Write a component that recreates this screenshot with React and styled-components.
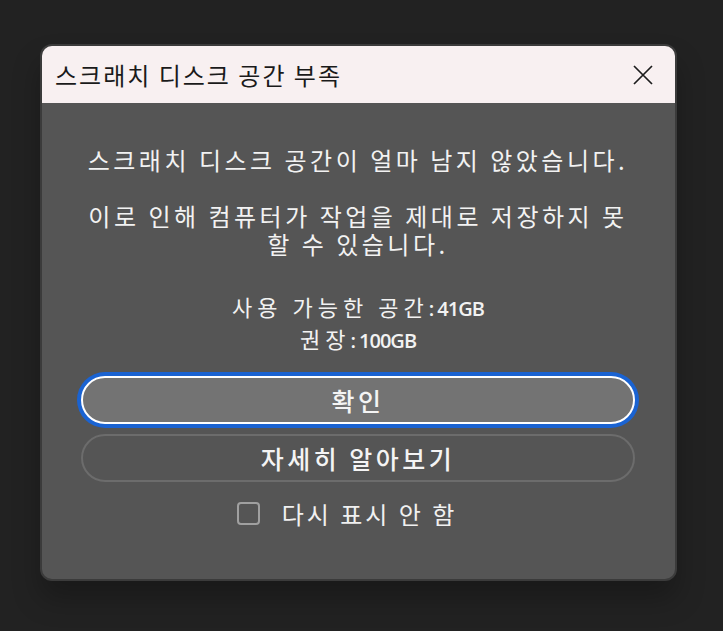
import styled, { createGlobalStyle } from "styled-components"

const GlobalStyle = createGlobalStyle`
  html, body {
    margin: 0;
    padding: 0;
    background: #222222;
  }
  body {
    font-family: "Noto Sans CJK KR", "Noto Sans", sans-serif;
  }
`

export default function App(){
  return (
    <Page>
      <GlobalStyle />
      <Dialog>
        <TitleBar>
          <Title>스크래치 디스크 공간 부족</Title>
          <CloseButton aria-label="닫기">
            <svg width="20" height="20" viewBox="0 0 20 20">
              <path d="M1 1 L19 19 M19 1 L1 19" stroke="#1c1c1c" strokeWidth="1.7" fill="none" />
            </svg>
          </CloseButton>
        </TitleBar>
        <Body>
          <Message>스크래치 디스크 공간이 얼마 남지 않았습니다.</Message>
          <Message gap={28}>이로 인해 컴퓨터가 작업을 제대로 저장하지 못 할 수 있습니다.</Message>
          <Stats>
            <StatLine>사용 가능한 공간<Num>: 41GB</Num></StatLine>
            <StatLine>권장<Num>: 100GB</Num></StatLine>
          </Stats>
          <Button primary>확인</Button>
          <Button>자세히 알아보기</Button>
          <CheckRow>
            <Box />
            <CheckLabel>다시 표시 안 함</CheckLabel>
          </CheckRow>
        </Body>
      </Dialog>
    </Page>
  )
}

const Page = styled.div`
  width: 723px;
  height: 631px;
  padding: 44px 0 0 40px;
  box-sizing: border-box;
`

const Dialog = styled.div`
  width: 637px;
  height: 537px;
  box-sizing: border-box;
  border: 2px solid #3b3b3b;
  border-radius: 12px;
  background: #555555;
  overflow: hidden;
  box-shadow: 0 18px 28px rgba(0, 0, 0, 0.25);
  display: flex;
  flex-direction: column;
`

const TitleBar = styled.div`
  height: 57px;
  flex-shrink: 0;
  background: #f8f0f1;
  display: flex;
  align-items: center;
  justify-content: space-between;
  padding: 0 22px 0 13px;
`

const Title = styled.div`
  font-size: 24px;
  letter-spacing: 2px;
  color: #1a1a1a;
`

const CloseButton = styled.div`
  width: 20px;
  height: 20px;
  display: flex;
`

const Body = styled.div`
  padding: 43px 40px 0 39px;
  display: flex;
  flex-direction: column;
  align-items: stretch;
  color: #f2f2f2;
  text-align: center;
`

const Message = styled.p`
  margin: ${p => p.gap || 0}px 6px 0;
  font-size: 24px;
  line-height: 28px;
  letter-spacing: 3.5px;
`

const Stats = styled.div`
  margin-top: 32px;
  font-size: 22px;
  letter-spacing: 5px;
`

const StatLine = styled.div`
  height: 32px;
  line-height: 32px;
`

const Num = styled.span`
  font-family: "Open Sans", "Noto Sans", sans-serif;
  font-size: 20px;
  line-height: 1;
  letter-spacing: -1px;
  font-weight: 600;
`

const Button = styled.div`
  height: 48px;
  box-sizing: border-box;
  margin-top: ${p => p.primary ? 22 : 10}px;
  border-radius: 24px;
  border: 2px solid ${p => p.primary ? "#ffffff" : "#6c6c6c"};
  background: ${p => p.primary ? "#737373" : "transparent"};
  box-shadow: ${p => p.primary ? "0 0 0 4px #1a63d2" : "none"};
  display: flex;
  align-items: center;
  justify-content: center;
  font-size: 25px;
  font-weight: 500;
  letter-spacing: 3.5px;
  color: #f4f4f4;
`

const CheckRow = styled.div`
  margin-top: 14px;
  display: flex;
  align-items: center;
  justify-content: center;
  gap: 22px;
  padding-right: 22px;
`

const Box = styled.div`
  width: 23px;
  height: 23px;
  box-sizing: border-box;
  border: 2px solid #a0a0a0;
  border-radius: 4px;
`

const CheckLabel = styled.span`
  font-size: 24px;
  letter-spacing: 3px;
  color: #f0f0f0;
`
